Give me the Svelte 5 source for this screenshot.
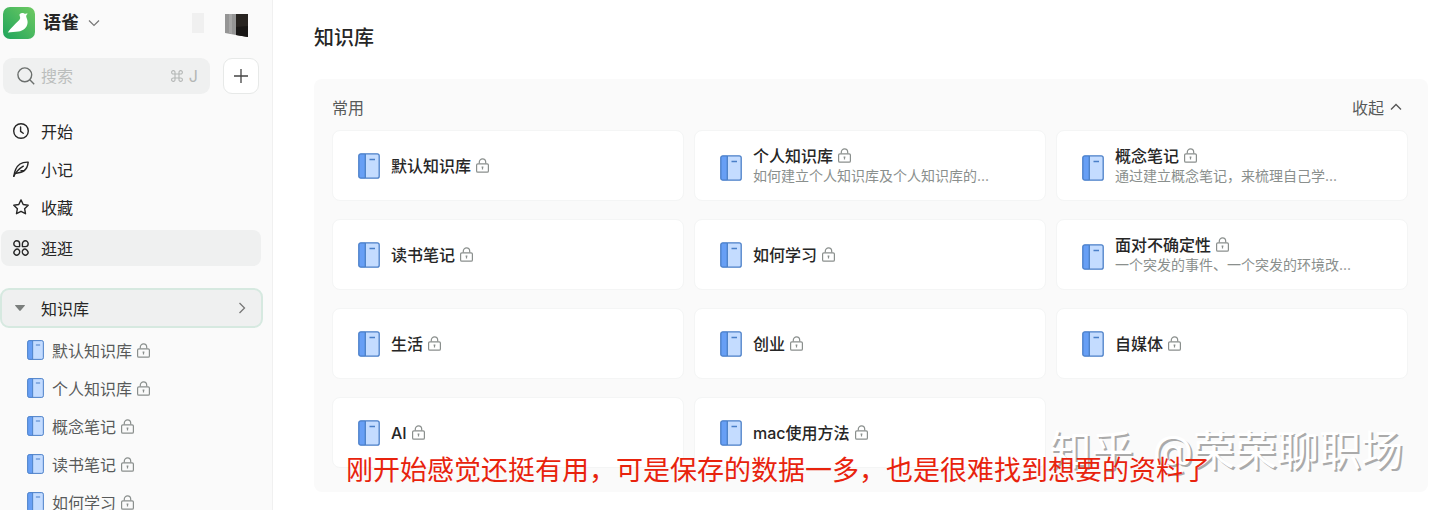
<script>
  const navItems = [
    { label: '开始', icon: 'clock' },
    { label: '小记', icon: 'feather' },
    { label: '收藏', icon: 'star' },
    { label: '逛逛', icon: 'explore', active: true }
  ];

  const sidebarBooks = ['默认知识库', '个人知识库', '概念笔记', '读书笔记', '如何学习'];

  const books = [
    { name: '默认知识库' },
    { name: '个人知识库', desc: '如何建立个人知识库及个人知识库的...' },
    { name: '概念笔记', desc: '通过建立概念笔记，来梳理自己学...' },
    { name: '读书笔记' },
    { name: '如何学习' },
    { name: '面对不确定性', desc: '一个突发的事件、一个突发的环境改...' },
    { name: '生活' },
    { name: '创业' },
    { name: '自媒体' },
    { name: 'AI' },
    { name: 'mac使用方法' }
  ];

  let groupOpen = $state(true);
  let panelOpen = $state(true);
</script>

{#snippet book()}
  <svg class="book" viewBox="0 0 22 26" aria-hidden="true">
    <rect x="0.8" y="0.8" width="20.4" height="24.4" rx="2" fill="#c4dcff" />
    <path d="M2.8 0.8H7v24.4H2.8a2 2 0 0 1-2-2V2.8a2 2 0 0 1 2-2z" fill="#679ff5" />
    <rect x="0.8" y="0.8" width="20.4" height="24.4" rx="2" fill="none" stroke="#4a7fc8" stroke-width="1.3" />
    <path d="M7.3 1v24M11.5 6.5h5.5" fill="none" stroke="#4a7fc8" stroke-width="1.3" />
  </svg>
{/snippet}

{#snippet lock()}
  <svg class="lock" viewBox="0 0 13 15" fill="none" stroke="#8a8f8d" aria-hidden="true">
    <rect x="0.6" y="5.8" width="11.8" height="8.4" rx="1.3" stroke-width="1.2" />
    <path d="M3.3 5.6V4.1a3.2 3.2 0 0 1 6.4 0v1.5" stroke-width="1.2" />
    <path d="M6.5 8.8v2.8M5.6 9.1h1.8" stroke-width="1.2" />
  </svg>
{/snippet}

<div class="page">
  <aside class="sidebar">
    <header class="brand">
      <svg class="logo" viewBox="0 0 32 32" aria-hidden="true">
        <defs>
          <linearGradient id="logoFill" x1="1" y1="0" x2="0" y2="1">
            <stop offset="0" stop-color="#6fca62" />
            <stop offset="1" stop-color="#1fa45c" />
          </linearGradient>
        </defs>
        <rect width="32" height="32" rx="7" fill="url(#logoFill)" />
        <path
          d="M16.6 7.200c1.200-1.200 3-1.400 4.600-.7 1 .4 2 .1 3.400 0-.3 1.100-1.500 1.600-1.400 2.900.2 1.800 1.700 3.500 1.400 6.400-.5 5-4.300 8.200-9.200 8.700-3.400.4-7 .6-10.600.9 3-4.200 6.900-7.800 10.700-11.600 1.200-1.200 1.800-2.200 1.600-3.600-.1-1-.9-1.900-.5-3z"
          fill="#fff"
        />
      </svg>
      <button class="space" type="button">
        语雀
        <svg width="12" height="8" viewBox="0 0 12 8" fill="none" stroke="#777" stroke-width="1.2">
          <path d="M1 1.5l5 5 5-5" />
        </svg>
      </button>
      <span class="blank"></span>
      <svg class="avatar" viewBox="0 0 23 23" aria-hidden="true">
        <path d="M0 0h11v21L0 19z" fill="#959595" />
        <path d="M4 0h3v20l-3-1z" fill="#a6a6a6" />
        <path d="M11 0h12v23l-12-2z" fill="#282421" />
        <path d="M11 13l12-1v11l-12-2z" fill="#191716" />
      </svg>
    </header>

    <div class="search-row">
      <label class="search">
        <svg width="18" height="18" viewBox="0 0 18 18" fill="none" stroke="#6b6f6d" stroke-width="1.4" aria-hidden="true">
          <circle cx="7.8" cy="7.8" r="6.9" />
          <path d="M12.8 12.8l4.4 4.4" />
        </svg>
        <input type="text" placeholder="搜索" aria-label="搜索" />
        <svg width="12" height="12" viewBox="0 0 12 12" fill="none" stroke="#b4b7b6" stroke-width="1.1" aria-hidden="true">
          <path d="M4 4V2.4A1.7 1.7 0 1 0 2.4 4h7.2A1.7 1.7 0 1 0 8 2.4v7.2A1.7 1.7 0 1 0 9.6 8H2.4A1.7 1.7 0 1 0 4 9.6z" />
        </svg>
        <kbd>J</kbd>
      </label>
      <button class="add" type="button" aria-label="新建">
        <svg width="14" height="14" viewBox="0 0 14 14" stroke="#444" stroke-width="1.3">
          <path d="M7 0v14M0 7h14" />
        </svg>
      </button>
    </div>

    <nav class="nav">
      {#each navItems as item}
        <a href="#{item.icon}" class:active={item.active}>
          <svg width="16" height="16" viewBox="0 0 16 16" fill="none" stroke="#262626" stroke-width="1.4" stroke-linejoin="round" stroke-linecap="round">
            {#if item.icon === 'clock'}
              <circle cx="8" cy="8" r="7.3" />
              <path d="M7.6 4v4.4l2.6 1.9" />
            {:else if item.icon === 'feather'}
              <path d="M.8 15.3C1.5 10 3.5 5.5 7 3c2.5-1.7 5.5-2 8.2-1.9-.3 3.200-1.6 6.600-4 8.500-2.200 1.800-5.200 2.300-8 2.600" />
              <path d="M.8 15.3C3 11 6 7.7 10.3 5.2M8 9.8h2.8" />
            {:else if item.icon === 'star'}
              <path d="M8 .9l2.2 4.6 5 .7-3.6 3.5.9 5L8 12.3l-4.5 2.4.9-5L.8 6.200l5-.7z" />
            {:else}
              <path d="M6.6 6.6H3.7a2.9 2.9 0 1 1 2.9-2.9z" />
              <path d="M9.4 6.6h2.9a2.9 2.9 0 1 0-2.9-2.9z" />
              <path d="M6 9.9c1 1 .9 3.100-.3 4.300s-3 1.100-4 .1-.9-2.800.3-4 3-1.400 4-.4z" />
              <path d="M10 9.9c-1 1-.9 3.100.3 4.300s3 1.100 4 .1.9-2.800-.3-4-3-1.400-4-.4z" />
            {/if}
          </svg>
          {item.label}
        </a>
      {/each}
    </nav>

    <button class="group" type="button" aria-expanded={groupOpen} onclick={() => (groupOpen = !groupOpen)}>
      <svg width="12" height="8" viewBox="0 0 12 8" fill="#7b7f7d">
        <path d="M1.6 1h8.8q1 0 .4.8L6.7 6.6q-.7.7-1.4 0L1.2 1.8q-.6-.8.4-.8z" />
      </svg>
      <span>知识库</span>
      <svg width="8" height="12" viewBox="0 0 8 12" fill="none" stroke="#777" stroke-width="1.3">
        <path d="M1.5 1l5 5-5 5" />
      </svg>
    </button>

    {#if groupOpen}
      <ul class="book-list">
        {#each sidebarBooks as name}
          <li><a href="#book">{@render book()}{name}{@render lock()}</a></li>
        {/each}
      </ul>
    {/if}
  </aside>

  <main class="main">
    <h1>知识库</h1>

    <section class="panel">
      <div class="panel-head">
        <h2>常用</h2>
        <button type="button" aria-expanded={panelOpen} onclick={() => (panelOpen = !panelOpen)}>
          收起
          <svg width="12" height="8" viewBox="0 0 12 8" fill="none" stroke="#555" stroke-width="1.3">
            <path d="M1 6.5l5-5 5 5" />
          </svg>
        </button>
      </div>

      {#if panelOpen}
        <div class="cards">
          {#each books as item}
            <a class="card" class:with-desc={item.desc} href="#book">
              {@render book()}
              <div class="card-text">
                <div class="card-title">{item.name}{@render lock()}</div>
                {#if item.desc}
                  <div class="card-desc">{item.desc}</div>
                {/if}
              </div>
            </a>
          {/each}
        </div>
      {/if}

      <p class="watermark"><span>知乎</span> <span>@荣荣聊职场</span></p>
      <p class="note">刚开始感觉还挺有用，可是保存的数据一多，也是很难找到想要的资料了</p>
    </section>
  </main>
</div>

<style>
  :global(body) {
    background: #fff;
    font-family: Inter, 'Noto Sans CJK SC', sans-serif;
    font-size: 16px;
    color: #262626;
  }

  .page {
    display: flex;
    height: 100vh;
    overflow: hidden;
  }

  .page * {
    box-sizing: border-box;
  }

  svg {
    flex: none;
  }

  a {
    color: inherit;
    text-decoration: none;
  }

  button {
    font: inherit;
    color: inherit;
    border: 0;
    padding: 0;
    background: none;
    cursor: pointer;
  }

  .sidebar {
    flex: 0 0 273px;
    overflow: hidden;
    background: #fafafa;
    border-right: 1px solid #f0f0f0;
  }

  .brand {
    display: flex;
    align-items: center;
    height: 46px;
    padding: 0 24px 0 3px;
  }

  .logo {
    width: 32px;
    height: 32px;
  }

  .space {
    display: flex;
    align-items: center;
    gap: 9px;
    margin-left: 8px;
    font-size: 18px;
    font-weight: 700;
    line-height: 24px;
  }

  .blank {
    width: 12px;
    height: 20px;
    margin-left: auto;
    background: #f0f0f0;
  }

  .avatar {
    width: 23px;
    height: 23px;
    margin: 4px 0 0 21px;
  }

  .search-row {
    display: flex;
    gap: 13px;
    padding: 12px 13px 0 3px;
  }

  .search {
    flex: 1;
    display: flex;
    align-items: center;
    min-width: 0;
    height: 36px;
    padding: 0 12px 0 14px;
    border-radius: 9px;
    background: #eff0f0;
  }

  .search input {
    flex: 1;
    min-width: 0;
    padding: 0 6px;
    border: 0;
    outline: 0;
    background: none;
    font: inherit;
  }

  .search input::placeholder {
    color: #bbbebd;
  }

  .search kbd {
    margin-left: 6px;
    font: inherit;
    color: #b4b7b6;
  }

  .add {
    display: flex;
    flex: none;
    align-items: center;
    justify-content: center;
    width: 36px;
    height: 36px;
    border: 1px solid #e7e9e8;
    border-radius: 9px;
    background: #fff;
  }

  .nav {
    display: grid;
    gap: 2px;
    padding: 19px 11px 0 1px;
  }

  .nav a {
    display: flex;
    align-items: center;
    gap: 12px;
    height: 36px;
    padding-left: 12px;
    border-radius: 8px;
  }

  .nav a.active {
    margin-top: 3px;
    background: #eff0f0;
  }

  .group {
    display: flex;
    align-items: center;
    width: 263px;
    height: 40px;
    margin-top: 22px;
    padding: 0 15px 0 12px;
    border: 2px solid #d6e9e0;
    border-radius: 9px;
    background: #eff0f0;
    text-align: left;
  }

  .group span {
    flex: 1;
    margin-left: 15px;
  }

  .book-list {
    margin: 3px 0 0;
    padding: 0;
    list-style: none;
  }

  .book-list a {
    display: flex;
    align-items: center;
    height: 38px;
    padding-left: 27px;
    color: #585a5a;
  }

  .book {
    width: 22px;
    height: 26px;
  }

  .book-list .book {
    width: 17px;
    height: 20px;
    margin-right: 8px;
  }

  .lock {
    width: 13px;
    height: 15px;
    margin-left: 5px;
  }

  .main {
    flex: 1;
    min-width: 0;
    padding: 23px 12px 18px 41px;
  }

  h1 {
    margin: 0 0 26px;
    font-size: 20px;
    font-weight: 500;
    line-height: 30px;
  }

  .panel {
    position: relative;
    padding: 16px 20px 24px 18px;
    border-radius: 8px;
    background: #fafafa;
  }

  .panel-head {
    display: flex;
    align-items: center;
    justify-content: space-between;
    height: 24px;
    margin-bottom: 11px;
    padding-right: 6px;
    color: #585a5a;
  }

  .panel-head h2 {
    margin: 0;
    font-size: 16px;
    font-weight: 400;
  }

  .panel-head button {
    display: flex;
    align-items: center;
    gap: 6px;
  }

  .cards {
    display: grid;
    grid-template-columns: repeat(3, minmax(0, 1fr));
    gap: 18px 10px;
  }

  .card {
    display: flex;
    align-items: center;
    gap: 11px;
    height: 71px;
    padding: 0 25px;
    border: 1px solid #f4f5f5;
    border-radius: 8px;
    background: #fff;
  }

  .card.with-desc .book {
    margin-top: 4px;
  }

  .card-text {
    min-width: 0;
  }

  .card-title {
    display: flex;
    align-items: center;
    font-weight: 500;
    line-height: 20px;
  }

  .card-desc {
    font-size: 14px;
    line-height: 20px;
    color: #8a8f8d;
    white-space: nowrap;
  }

  .note,
  .watermark {
    position: absolute;
    margin: 0;
    white-space: nowrap;
  }

  .note {
    left: 32px;
    bottom: 1px;
    font-size: 27px;
    line-height: 40px;
    color: #e8230d;
  }

  .watermark {
    display: flex;
    gap: 19px;
    right: 25px;
    bottom: 13px;
    font-size: 42px;
    line-height: 56px;
    color: #fff;
    text-shadow: 2px 2px 0 #aaa;
  }
</style>
